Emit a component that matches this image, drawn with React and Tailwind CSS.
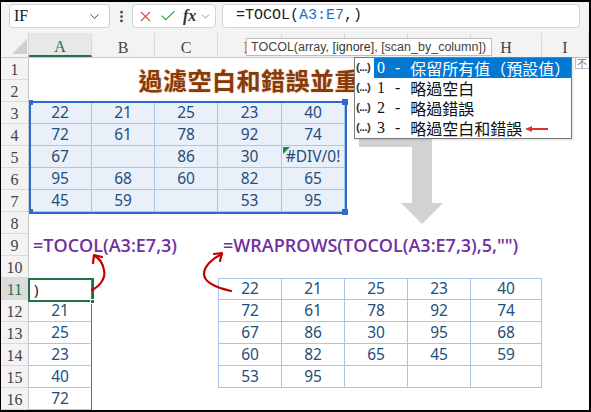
import { Check, ChevronDown, EllipsisVertical, X } from "lucide-react";

const COLS = ["A", "B", "C", "D", "E", "F", "G", "H", "I"];
const W = ["w-[63px]", "w-[63px]", "w-[63px]", "w-[64px]", "w-[63px]", "w-[63px]", "w-[63px]", "w-[71px]", "w-[47px]"];

const source = [
  [22, 21, 25, 23, 40],
  [72, 61, 78, 92, 74],
  [67, "", 86, 30, "#DIV/0!"],
  [95, 68, 60, 82, 65],
  [45, 59, "", 53, 95],
];

const wrapped = [
  [22, 21, 25, 23, 40],
  [72, 61, 78, 92, 74],
  [67, 86, 30, 95, 68],
  [60, 82, 65, 45, 59],
  [53, 95, "", "", ""],
];

const tocol = [21, 25, 23, 40, 72];

const options = ["保留所有值（預設值）", "略過空白", "略過錯誤", "略過空白和錯誤"];

const num = "text-[15.5px] text-[#1f4e79] flex items-center justify-center";

function FormulaBar() {
  return (
    <div className="flex h-[31px] items-start bg-[#f3f3f3] pt-[2px]">
      {/* name box */}
      <div className="ml-[8px] flex h-[24px] w-[101px] items-center justify-between rounded-[4px] border border-[#d4d4d4] bg-white pl-[4px] pr-[7px]">
        <span className="font-['Liberation_Serif'] text-[16px] text-[#222]">IF</span>
        <ChevronDown size={15} strokeWidth={1.6} className="text-[#444]" />
      </div>
      <div className="flex h-[24px] w-[22px] items-center justify-center">
        <EllipsisVertical size={15} strokeWidth={2.4} className="text-[#444]" />
      </div>
      {/* cancel / enter / fx */}
      <div className="flex h-[24px] w-[84px] items-center rounded-[4px] border border-[#d4d4d4] bg-white pl-[4px]">
        <X size={17} strokeWidth={1.5} className="text-[#e2453c]" />
        <Check size={18} strokeWidth={1.5} className="ml-[5px] text-[#3ea83e]" />
        <span className="ml-[6px] font-['Liberation_Serif'] text-[16px] font-bold italic text-[#333]">fx</span>
        <ChevronDown size={13} strokeWidth={1.6} className="ml-[3px] text-[#888]" />
      </div>
      {/* formula */}
      <div className="ml-[6px] flex h-[24px] w-[358px] items-center rounded-[4px] border border-[#d4d4d4] bg-white pl-[13px]">
        <span className="font-['Liberation_Mono'] text-[15px] text-[#222]">
          =TOCOL(<span className="text-[#1f6fc5]">A3:E7</span>,)
        </span>
      </div>
    </div>
  );
}

function ColumnHeaders() {
  return (
    <div className="flex h-[25px] border-b border-[#c8c8c8] bg-[#f3f3f3]">
      <div className="relative w-[28px] border-r border-[#d4d4d4]">
        <svg width="28" height="25" className="absolute left-0 top-0">
          <polygon points="26,6 26,21 11,21" fill="#cfcfcf" />
        </svg>
      </div>
      {COLS.map((c, i) => (
        <div
          key={c}
          className={`${W[i]} flex items-center justify-center border-r border-[#dadada] pt-[5px] font-['Liberation_Serif'] text-[16px] ${
            i === 0 ? "border-b-2 border-b-[#217346] bg-[#e8e8e8] text-[#217346]" : "text-[#444]"
          }`}
        >
          {c}
        </div>
      ))}
    </div>
  );
}

function RowHeaders() {
  return (
    <div className="flex w-[28px] flex-col border-r border-[#c8c8c8] bg-[#f3f3f3]">
      {Array.from({ length: 16 }, (_, i) => i + 1).map((n) => (
        <div
          key={n}
          className={`flex h-[22px] items-center justify-center border-b border-[#dadada] pt-[3px] font-['Liberation_Serif'] text-[16px] ${
            n === 11 ? "bg-[#dcdcdc] text-[#217346]" : "text-[#444]"
          }`}
        >
          {n}
        </div>
      ))}
    </div>
  );
}

function cell(r, c) {
  // source block A3:E7
  if (r >= 3 && r <= 7 && c < 5) {
    const v = source[r - 3][c];
    return {
      cls: `bg-[#eaf0f9] border-r border-b border-[#a6c6ea] ${r === 3 ? "border-t" : ""} ${num} ${
        v === "#DIV/0!" ? "text-[14px]" : ""
      }`,
      content: v,
    };
  }
  if (r === 9 && c === 0) {
    return {
      cls: "overflow-visible whitespace-nowrap pl-[4px] flex items-center font-['Open_Sans'] text-[18px] font-semibold text-[#7030a0]",
      content: "=TOCOL(A3:E7,3)",
    };
  }
  if (r === 9 && c === 3) {
    return {
      cls: "overflow-visible whitespace-nowrap pl-[5px] flex items-center font-['Open_Sans'] text-[18px] font-semibold text-[#7030a0]",
      content: '=WRAPROWS(TOCOL(A3:E7,3),5,"")',
    };
  }
  if (r === 11 && c === 0) {
    return {
      cls: "border-r border-[#3d6fc9] pl-[5px] flex items-center text-[15px] text-[#222]",
      content: ")",
    };
  }
  if (r >= 12 && c === 0) {
    return {
      cls: `border-r border-r-[#3d6fc9] border-b border-b-[#a6c6ea] ${num}`,
      content: tocol[r - 12],
    };
  }
  if (r >= 11 && r <= 15 && c >= 3 && c <= 7) {
    return {
      cls: `border-r border-b border-[#a6c6ea] ${r === 11 ? "border-t" : ""} ${c === 3 ? "border-l" : ""} ${num}`,
      content: wrapped[r - 11][c - 3],
    };
  }
  return { cls: "", content: "" };
}

function Sheet() {
  return (
    <div className="flex">
      <RowHeaders />
      <div className="flex flex-col">
        {/* rows 1-2 merged A:H */}
        <div className="flex h-[44px]">
          <div className="flex w-[513px] items-center justify-center font-['Noto_Sans_CJK_TC'] text-[24px] font-bold tracking-[0.5px] text-[#843c0c] [text-shadow:0_0_2px_#f4b183]">
            過濾空白和錯誤並重新排列
          </div>
          <div className="w-[47px]" />
        </div>
        {Array.from({ length: 14 }, (_, i) => i + 3).map((r) => (
          <div key={r} className="flex h-[22px]">
            {COLS.map((_, c) => {
              const { cls, content } = cell(r, c);
              return (
                <div key={c} className={`${W[c]} h-[22px] font-['Noto_Sans'] ${cls}`}>
                  {content}
                </div>
              );
            })}
          </div>
        ))}
      </div>
    </div>
  );
}

function Overlays() {
  return (
    <>
      {/* gray flow arrow, under the dropdown */}
      <svg viewBox="1 2 588 408" className="pointer-events-none absolute left-0 top-0 h-[408px] w-[588px]">
        <polygon points="359,126 432,126 432,203 443,203 422,224 401,203 412,203 412,147 359,147" fill="#d2d2d2" />
      </svg>

      {/* selection A3:E7 */}
      <div className="absolute left-[28px] top-[99px] h-[113px] w-[318px] border-2 border-[#2f6bcd]" />
      <div className="absolute left-[28px] top-[98px] h-[5px] w-[4px] bg-[#2f6bcd]" />
      <div className="absolute left-[341px] top-[97px] h-[6px] w-[6px] bg-[#2f6bcd]" />
      <div className="absolute left-[28px] top-[207px] h-[5px] w-[4px] bg-[#2f6bcd]" />
      <div className="absolute left-[341px] top-[207px] h-[6px] w-[6px] bg-[#2f6bcd]" />
      {/* error marker E5 */}
      <svg className="absolute left-[282px] top-[145px]" width="7" height="7">
        <polygon points="0,0 7,0 0,7" fill="#1e8a3c" />
      </svg>

      {/* active cell A11 */}
      <div className="absolute left-[27px] top-[276px] h-[24px] w-[66px] border-2 border-[#217346]" />
      <div className="absolute left-[89px] top-[297px] h-[5px] w-[5px] border border-white bg-[#217346]" />

      {/* argument tooltip */}
      <div className="absolute left-[245px] top-[36px] flex h-[18px] w-[246px] items-center whitespace-pre border border-[#bdbdbd] bg-white pl-[4px] font-['Liberation_Sans'] text-[12.5px] text-[#444]">
        {"TOCOL(array, "}
        <span className="font-medium text-[#333]">[ignore]</span>
        {", [scan_by_column])"}
      </div>

      {/* small clipped tip at the right edge */}
      <div className="absolute left-[574px] top-[55px] flex h-[12px] w-[20px] items-center overflow-hidden border border-[#bdbdbd] bg-white pl-[1px] font-['Noto_Sans_CJK_TC'] text-[10px] leading-none text-[#777]">
        不
      </div>

      {/* ignore options dropdown */}
      <div className="absolute left-[353px] top-[55px] h-[82px] w-[218px] border border-[#7a7a7a] bg-white shadow-[1px_1px_2px_rgba(0,0,0,0.15)]">
        {options.map((t, i) => (
          <div key={i} className="flex h-[20px] items-center leading-none">
            <span className="w-[19px] overflow-hidden whitespace-nowrap pl-[1px] font-['Liberation_Sans'] text-[11.5px] font-bold tracking-[-0.6px] text-[#333]">
              (...)
            </span>
            <div
              className={`flex h-[20px] flex-1 items-center pl-[3px] font-['Liberation_Serif','Noto_Sans_CJK_TC',serif] text-[16px] ${
                i === 0 ? "bg-[#0078d4] text-white" : "text-[#111]"
              }`}
            >
              <span>{i}</span>
              <span className="ml-[10px]">-</span>
              <span className="ml-[10px] font-['Noto_Sans_CJK_TC']">{t}</span>
            </div>
          </div>
        ))}
      </div>

      {/* red annotation arrows */}
      <svg viewBox="1 2 588 408" className="pointer-events-none absolute left-0 top-0 h-[408px] w-[588px]">
        <g fill="none" stroke="#c00000" strokeWidth="2.2" strokeLinecap="round" strokeLinejoin="round">
          <path d="M92 290 C100 286 106 278 104 270 C103 264 100 259 95 256" />
          <polyline points="93,263 94,255 102,257" />
          <path d="M231 291 C218 288 204 283 204 274 C204 266 213 258 222 254" />
          <polyline points="214,254 222,253 220,261" />
        </g>
        <polygon points="525,129 532,126 532,128 548,128 548,130 532,130 532,132" fill="#e03030" />
      </svg>
    </>
  );
}

export default function App() {
  return (
    <div className="relative h-[412px] w-[591px] overflow-hidden border-b-2 border-l border-r-2 border-t-2 border-black bg-white">
      <FormulaBar />
      <ColumnHeaders />
      <Sheet />
      <Overlays />
    </div>
  );
}
